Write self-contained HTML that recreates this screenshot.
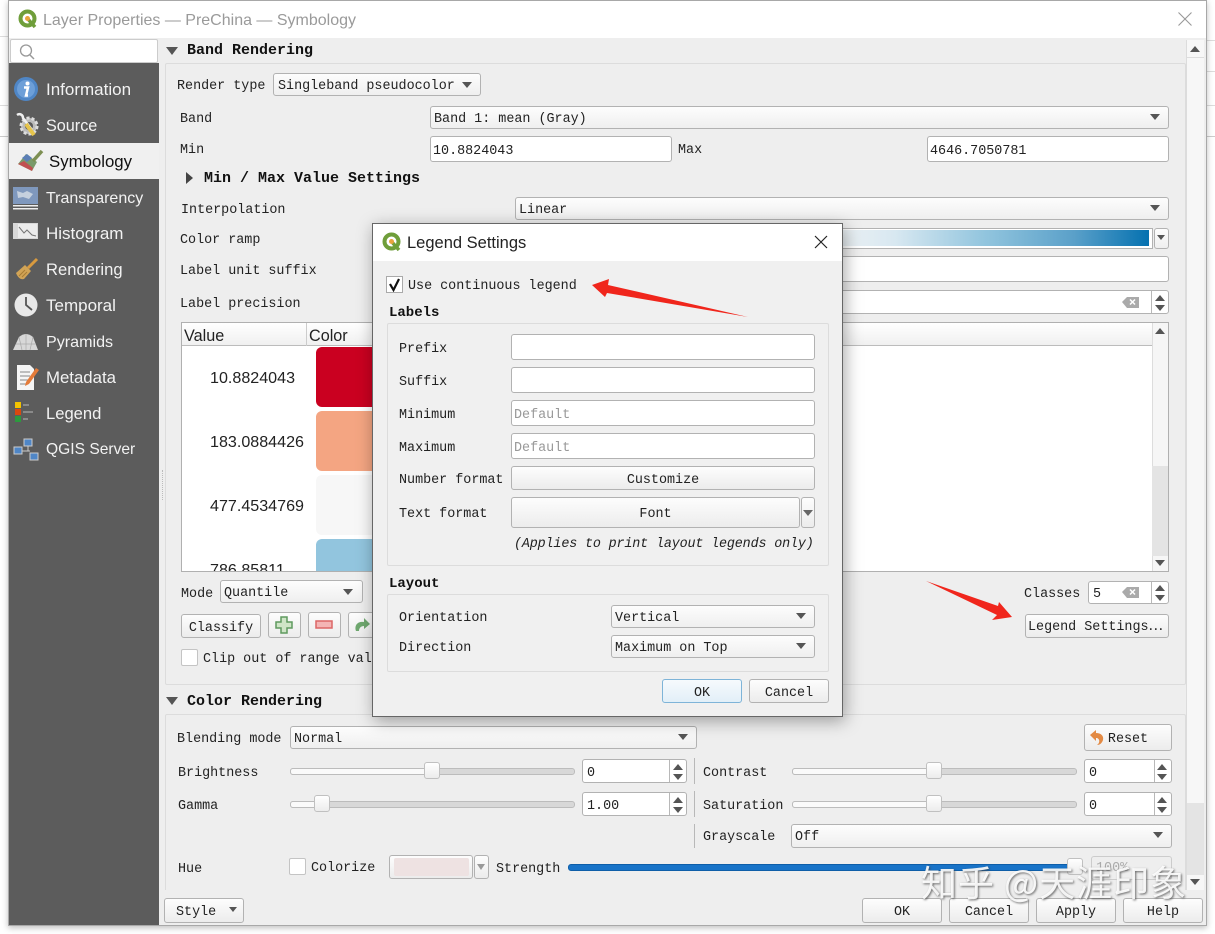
<!DOCTYPE html>
<html><head><meta charset="utf-8"><style>
html,body{margin:0;padding:0;background:#fff}
#p{position:relative;width:1215px;height:934px;overflow:hidden;background:#fff;font-family:"Liberation Mono","Noto Sans CJK SC",monospace;font-size:13.4px;color:#222}
#p div,#p svg{position:absolute;box-sizing:border-box}
.l{white-space:nowrap;height:20px;line-height:20px;margin-top:2px}
.h{white-space:nowrap;height:20px;line-height:20px;margin-top:1px;font-weight:bold;font-size:15px;color:#111}
.s{white-space:nowrap;height:24px;line-height:24px;margin-top:1px;color:#f2f2f2;font-family:"Liberation Sans",sans-serif;font-size:16.6px;left:46px}
.c{background:linear-gradient(#fdfdfd,#efefef);border:1px solid #b2b2b2;border-radius:3px;padding-left:3px;white-space:nowrap;color:#222}
.i{background:#fff;border:1px solid #b2b2b2;border-radius:3px;padding-left:2px;white-space:nowrap;color:#222}
.b{background:linear-gradient(#fdfdfd,#ececec);border:1px solid #b2b2b2;border-radius:3px;text-align:center;white-space:nowrap;color:#222}
.a{width:0;height:0;border-left:5px solid transparent;border-right:5px solid transparent;border-top:6px solid #555}
.u{width:0;height:0;border-left:5px solid transparent;border-right:5px solid transparent;border-bottom:6px solid #555}
.g{border:1px solid #dcdcdc;border-radius:2px}
.v{background:#b8b8b8;width:1px}
.tr{height:7px;border:1px solid #bcbcbc;border-radius:3px;background:#d8d8d8}
.tf{height:7px;border:1px solid #bcbcbc;border-radius:3px;background:#fafafa}
.th{width:16px;height:17px;border:1px solid #c0c0c0;border-radius:3px;background:linear-gradient(#fff,#ececec)}
.sp{border-left:1px solid #b8b8b8}
</style></head><body><div id="p">

<!-- background behind window -->
<div style="left:0;top:36px;width:9px;height:1px;background:#ddd"></div>
<div style="left:0;top:105px;width:9px;height:1px;background:#ddd"></div>
<div style="left:0;top:136px;width:9px;height:1px;background:#ccc"></div>
<div style="left:1207px;top:40px;width:8px;height:1px;background:#ddd"></div>
<div style="left:1207px;top:71px;width:8px;height:1px;background:#ddd"></div>
<div style="left:1207px;top:105px;width:8px;height:1px;background:#ddd"></div>
<div style="left:1207px;top:136px;width:8px;height:1px;background:#ccc"></div>

<!-- window -->
<div style="left:8px;top:0;width:1199px;height:926px;background:#eee;border:1px solid #a8a8a8;box-shadow:0 2px 6px rgba(0,0,0,.25)"></div>
<div style="left:9px;top:1px;width:1197px;height:37px;background:#fff"></div>
<svg style="left:18px;top:9px" width="20" height="20" viewBox="0 0 20 20"><circle cx="9.500" cy="9.500" r="7" fill="none" stroke="#6f9e3a" stroke-width="4"/><path d="M9 9l8 9" stroke="#6f9e3a" stroke-width="3.500"/><circle cx="9.500" cy="9.500" r="2.500" fill="#e8a33d"/></svg>
<div class="l" style="left:43px;top:9px;font-family:'Liberation Sans',sans-serif;font-size:16px;color:#9a9a9a">Layer Properties — PreChina — Symbology</div>
<svg style="left:1177px;top:11px" width="16" height="16"><path d="M1.500 1.500L14.500 14.500M14.500 1.500L1.500 14.500" stroke="#999" stroke-width="1.100"/></svg>

<!-- sidebar -->
<div style="left:9px;top:63px;width:150px;height:862px;background:#5c5c5c"></div>
<div style="left:10px;top:39px;width:148px;height:24px;background:#fff;border:1px solid #ccc;border-radius:2px"></div>
<svg style="left:18px;top:43px" width="18" height="18"><circle cx="8" cy="7.500" r="5.500" fill="none" stroke="#999" stroke-width="1.300"/><path d="M12 12l4 4" stroke="#999" stroke-width="1.500"/></svg>
<div style="left:9px;top:143px;width:150px;height:36px;background:#f0f0f0"></div>
<div class="s" style="top:77px;font-size:17px">Information</div>
<div class="s" style="top:113px;font-size:16.200px">Source</div>
<div class="s" style="top:149px;left:49px;color:#111;font-size:16.800px">Symbology</div>
<div class="s" style="top:186px;font-size:16px">Transparency</div>
<div class="s" style="top:221px;font-size:17px">Histogram</div>
<div class="s" style="top:257px">Rendering</div>
<div class="s" style="top:293px;font-size:17px">Temporal</div>
<div class="s" style="top:329px;font-size:16.100px">Pyramids</div>
<div class="s" style="top:365px;font-size:16.800px">Metadata</div>
<div class="s" style="top:401px">Legend</div>
<div class="s" style="top:437px;font-size:15.600px">QGIS Server</div>

<svg style="left:13px;top:76px" width="26" height="26"><circle cx="13" cy="13" r="12" fill="#4f86c6"/><circle cx="13" cy="13" r="9" fill="#6d9fd8"/><circle cx="14.500" cy="7.500" r="2" fill="#fff"/><path d="M11 11.500h4l-2 8h2" fill="none" stroke="#fff" stroke-width="2.500"/></svg>
<svg style="left:14px;top:112px" width="26" height="26"><circle cx="15" cy="14" r="8" fill="#bbb" stroke="#ddd" stroke-dasharray="3 2" stroke-width="3"/><circle cx="15" cy="14" r="4" fill="#5c5c5c"/><path d="M3 3c3-2 6 0 6 3l9 12" fill="none" stroke="#f0f0f0" stroke-width="2.500"/><path d="M12 12l8 11" stroke="#e5c44c" stroke-width="4"/></svg>
<svg style="left:16px;top:147px" width="28" height="26"><path d="M2 17L10 7l11 8-5 9z" fill="#7a9a6a"/><path d="M2 17l6-3 9 7-1 3z" fill="#c05050"/><path d="M6 11l5-4 5 4-5 4z" fill="#5b7fb5"/><path d="M17 14L26 4" stroke="#7d8f52" stroke-width="3.500"/></svg>
<svg style="left:13px;top:187px" width="26" height="24"><rect width="25" height="17" fill="#7f98bd"/><path d="M4 4l6 2 4-2 6 3-4 5-6-2-5 1z" fill="#c5d0de"/><rect y="18" width="25" height="1.500" fill="#eee"/><rect y="21" width="25" height="1.500" fill="#eee"/></svg>
<svg style="left:13px;top:223px" width="26" height="20"><rect width="25" height="16" fill="#d8d8d8"/><rect x="5" y="1" width="19" height="14" fill="#ececec"/><path d="M6 4l5 6 3-3 5 5 4 1" fill="none" stroke="#777" stroke-width="1"/></svg>
<svg style="left:15px;top:257px" width="24" height="24"><path d="M13 11L22 2" stroke="#d89a3f" stroke-width="3"/><path d="M1 16l9-8 6 6-7 8c-3 1-6-1-8-6z" fill="#d2a456"/><path d="M4 19l6-6M7 20l5-5" stroke="#a87c34"/></svg>
<svg style="left:14px;top:293px" width="25" height="25"><circle cx="12" cy="12" r="11.500" fill="#e8e8e8"/><path d="M12 4v8l6 5" fill="none" stroke="#555" stroke-width="1.800"/></svg>
<svg style="left:13px;top:332px" width="26" height="19"><path d="M0 18L6 5Q13-1 20 5l5 13z" fill="#d8d8d8"/><path d="M6 5l3 13M20 5l-3 13M13 2v16M3 12h20" stroke="#aaa" stroke-width=".7"/></svg>
<svg style="left:16px;top:364px" width="24" height="27"><path d="M1 1h13l4 4v21H1z" fill="#f5f5f5"/><path d="M4 8h10M4 12h10M4 16h8M4 20h6" stroke="#888"/><path d="M10 18L20 4l3 2-10 14-4 2z" fill="#e57c3a"/></svg>
<svg style="left:15px;top:402px" width="20" height="22"><rect width="6" height="6" fill="#f2c200"/><rect y="7" width="6" height="6" fill="#d9480f"/><rect y="14" width="6" height="6" fill="#2c9a3e"/><path d="M8 3h6M8 10h10M8 17h5" stroke="#999" stroke-width="1.500"/></svg>
<svg style="left:13px;top:438px" width="27" height="24"><rect x="11" y="1" width="8" height="7" fill="#4f86c6" stroke="#ccc"/><rect x="1" y="9" width="8" height="7" fill="#4f86c6" stroke="#ccc"/><rect x="17" y="15" width="8" height="7" fill="#4f86c6" stroke="#ccc"/><path d="M15 8v5M9 13h8" stroke="#ccc"/></svg>

<!-- right pane : band rendering -->
<div style="left:162px;top:470px;width:1px;height:30px;border-left:1px dotted #bbb"></div>
<div class="a" style="left:166px;top:47px;border-left-width:6px;border-right-width:6px;border-top-width:8px"></div>
<div class="h" style="left:187px;top:40px">Band Rendering</div>
<div class="g" style="left:165px;top:63px;width:1021px;height:622px"></div>
<div class="l" style="left:177px;top:75px">Render type</div>
<div class="c" style="left:273px;top:73px;width:208px;height:23px;line-height:26px;padding-left:4px">Singleband pseudocolor</div><div class="a" style="left:462px;top:82px"></div>
<div class="l" style="left:180px;top:108px">Band</div>
<div class="c" style="left:430px;top:106px;width:739px;height:23px;line-height:26px">Band 1: mean (Gray)</div><div class="a" style="left:1150px;top:114px"></div>
<div class="l" style="left:180px;top:139px">Min</div>
<div class="i" style="left:430px;top:136px;width:242px;height:26px;line-height:29px">10.8824043</div>
<div class="l" style="left:678px;top:139px">Max</div>
<div class="i" style="left:927px;top:136px;width:242px;height:26px;line-height:29px">4646.7050781</div>
<svg style="left:185px;top:171px" width="10" height="14"><path d="M1 1l7 6-7 6z" fill="#444"/></svg>
<div class="h" style="left:204px;top:168px">Min / Max Value Settings</div>
<div class="l" style="left:181px;top:199px">Interpolation</div>
<div class="c" style="left:515px;top:197px;width:654px;height:23px;line-height:26px">Linear</div><div class="a" style="left:1150px;top:205px"></div>
<div class="l" style="left:180px;top:229px">Color ramp</div>
<div style="left:400px;top:228px;width:753px;height:21px;border:1px solid #b2b2b2;background:#fff"></div>
<div style="left:401px;top:230px;width:748px;height:16px;background:linear-gradient(90deg,#f5f5f5 55%,#d8e8f1 66%,#92c5de 78%,#5aa0c9 90%,#0571b0)"></div>
<div class="c" style="left:1154px;top:228px;width:15px;height:21px"></div><div class="a" style="left:1157px;top:235px;border-left-width:4px;border-right-width:4px;border-top-width:5px"></div>
<div class="l" style="left:180px;top:260px">Label unit suffix</div>
<div class="i" style="left:400px;top:256px;width:769px;height:26px"></div>
<div class="l" style="left:180px;top:293px">Label precision</div>
<div class="i" style="left:400px;top:290px;width:769px;height:24px"></div>
<div class="sp" style="left:1151px;top:291px;width:1px;height:22px"></div>
<svg style="left:1122px;top:296px" width="18" height="12"><path d="M0 6l5-5h12v11H5z" fill="#aaa"/><path d="M8 3.500l5 5M13 3.500l-5 5" stroke="#fff" stroke-width="1.500"/></svg>
<div class="u" style="left:1155px;top:295px"></div><div class="a" style="left:1155px;top:305px"></div>

<!-- table -->
<div style="left:181px;top:322px;width:988px;height:250px;background:#fff;border:1px solid #b0b0b0"></div>
<div style="left:182px;top:323px;width:970px;height:23px;background:linear-gradient(#fff,#f0f0f0);border-bottom:1px solid #bcbcbc"></div>
<div style="left:306px;top:323px;width:1px;height:23px;background:#ccc"></div>
<div class="l" style="left:184px;top:324px;font-family:'Liberation Sans',sans-serif;font-size:16.200px">Value</div>
<div class="l" style="left:309px;top:324px;font-family:'Liberation Sans',sans-serif;font-size:16.200px">Color</div>
<div class="l" style="left:210px;top:366px;font-family:'Liberation Sans',sans-serif;font-size:16.100px">10.8824043</div>
<div class="l" style="left:210px;top:430px;font-family:'Liberation Sans',sans-serif;font-size:16.100px">183.0884426</div>
<div class="l" style="left:210px;top:494px;font-family:'Liberation Sans',sans-serif;font-size:16.100px">477.4534769</div>
<div style="left:210px;top:560px;height:11px;width:90px;overflow:hidden"><div class="l" style="left:0;top:-2px;font-family:'Liberation Sans',sans-serif;font-size:16.100px">786.85811</div></div>
<div style="left:316px;top:347px;width:70px;height:60px;background:#ca0020;border-radius:6px"></div>
<div style="left:316px;top:411px;width:70px;height:60px;background:#f4a582;border-radius:6px"></div>
<div style="left:316px;top:475px;width:70px;height:60px;background:#f7f7f7;border-radius:6px"></div>
<div style="left:316px;top:539px;width:70px;height:32px;background:#92c5de;border-radius:6px 6px 0 0"></div>
<div style="left:1152px;top:323px;width:16px;height:248px;background:#f6f6f6;border-left:1px solid #ddd"></div>
<div style="left:1152px;top:466px;width:16px;height:90px;background:#e4e4e4"></div>
<div class="u" style="left:1155px;top:328px"></div><div class="a" style="left:1155px;top:560px"></div>

<div class="l" style="left:181px;top:583px">Mode</div>
<div class="c" style="left:220px;top:580px;width:143px;height:23px;line-height:26px">Quantile</div><div class="a" style="left:343px;top:589px"></div>
<div class="b" style="left:181px;top:614px;width:80px;height:24px;line-height:28px">Classify</div>
<div class="b" style="left:268px;top:612px;width:33px;height:26px"></div>
<svg style="left:275px;top:616px" width="18" height="18"><path d="M6 1h6v5h5v6h-5v5H6v-5H1V6h5z" fill="#cfe5c7" stroke="#5f9a5f" stroke-width="1.500"/></svg>
<div class="b" style="left:308px;top:612px;width:33px;height:26px"></div>
<svg style="left:315px;top:620px" width="18" height="10"><rect x="1" y="1" width="16" height="7" fill="#f4b5b5" stroke="#dc6666" stroke-width="1.500"/></svg>
<div class="b" style="left:348px;top:612px;width:30px;height:26px"></div>
<svg style="left:354px;top:615px" width="19" height="20"><path d="M2 16c-2-6 2-10 8-9V3l6 6-6 5v-3c-3 0-5 2-5 5z" fill="#6fa86f"/></svg>
<div style="left:181px;top:649px;width:17px;height:17px;background:#fff;border:1px solid #c4c4c4;border-radius:2px"></div>
<div class="l" style="left:203px;top:648px">Clip out of range values</div>
<div class="l" style="left:1024px;top:583px">Classes</div>
<div class="i" style="left:1088px;top:581px;width:81px;height:23px;line-height:25px;padding-left:4px">5</div>
<div class="sp" style="left:1151px;top:582px;height:21px;width:1px"></div>
<svg style="left:1122px;top:586px" width="18" height="12"><path d="M0 6l5-5h12v11H5z" fill="#aaa"/><path d="M8 3.500l5 5M13 3.500l-5 5" stroke="#fff" stroke-width="1.500"/></svg>
<div class="u" style="left:1155px;top:585px"></div><div class="a" style="left:1155px;top:595px"></div>
<div class="b" style="left:1025px;top:614px;width:144px;height:24px;line-height:26px;text-align:left;padding-left:2px">Legend Settings<span style="font-family:'Noto Sans CJK SC',sans-serif;line-height:0">…</span></div>

<!-- color rendering -->
<div class="a" style="left:166px;top:697px;border-left-width:6px;border-right-width:6px;border-top-width:8px"></div>
<div class="h" style="left:187px;top:691px">Color Rendering</div>
<div class="g" style="left:165px;top:714px;width:1021px;height:180px;border-bottom:none"></div>
<div class="l" style="left:177px;top:728px">Blending mode</div>
<div class="c" style="left:290px;top:726px;width:407px;height:23px;line-height:26px">Normal</div><div class="a" style="left:678px;top:734px"></div>
<div class="b" style="left:1084px;top:724px;width:88px;height:27px;line-height:29px">Reset</div>
<svg style="left:1089px;top:729px" width="16" height="17"><path d="M1 6l6-5v3c5 0 8 3 7 7-1 3-3 5-6 5 3-2 3-6 0-7H7v3z" fill="#e38a44"/></svg>

<div class="l" style="left:178px;top:762px">Brightness</div>
<div class="tr" style="left:290px;top:768px;width:285px"></div><div class="tf" style="left:290px;top:768px;width:142px"></div><div class="th" style="left:424px;top:762px"></div>
<div class="i" style="left:582px;top:759px;width:105px;height:24px;line-height:27px;padding-left:4px">0</div><div class="sp" style="left:669px;top:760px;height:22px;width:1px"></div><div class="u" style="left:673px;top:764px"></div><div class="a" style="left:673px;top:774px"></div>
<div class="l" style="left:178px;top:795px">Gamma</div>
<div class="tr" style="left:290px;top:801px;width:285px"></div><div class="tf" style="left:290px;top:801px;width:32px"></div><div class="th" style="left:314px;top:795px"></div>
<div class="i" style="left:582px;top:792px;width:105px;height:24px;line-height:27px;padding-left:4px">1.00</div><div class="sp" style="left:669px;top:793px;height:22px;width:1px"></div><div class="u" style="left:673px;top:797px"></div><div class="a" style="left:673px;top:807px"></div>
<div class="v" style="left:694px;top:758px;height:26px"></div>
<div class="v" style="left:694px;top:791px;height:26px"></div>
<div class="v" style="left:694px;top:824px;height:24px"></div>
<div class="l" style="left:703px;top:762px">Contrast</div>
<div class="tr" style="left:792px;top:768px;width:285px"></div><div class="tf" style="left:792px;top:768px;width:142px"></div><div class="th" style="left:926px;top:762px"></div>
<div class="i" style="left:1084px;top:759px;width:88px;height:24px;line-height:27px;padding-left:4px">0</div><div class="sp" style="left:1154px;top:760px;height:22px;width:1px"></div><div class="u" style="left:1157px;top:764px"></div><div class="a" style="left:1157px;top:774px"></div>
<div class="l" style="left:703px;top:795px">Saturation</div>
<div class="tr" style="left:792px;top:801px;width:285px"></div><div class="tf" style="left:792px;top:801px;width:142px"></div><div class="th" style="left:926px;top:795px"></div>
<div class="i" style="left:1084px;top:792px;width:88px;height:24px;line-height:27px;padding-left:4px">0</div><div class="sp" style="left:1154px;top:793px;height:22px;width:1px"></div><div class="u" style="left:1157px;top:797px"></div><div class="a" style="left:1157px;top:807px"></div>
<div class="l" style="left:703px;top:826px">Grayscale</div>
<div class="c" style="left:791px;top:824px;width:381px;height:24px;line-height:25px">Off</div><div class="a" style="left:1153px;top:832px"></div>

<div class="l" style="left:178px;top:858px">Hue</div>
<div style="left:289px;top:858px;width:17px;height:17px;background:#fff;border:1px solid #c4c4c4;border-radius:2px"></div>
<div class="l" style="left:311px;top:857px">Colorize</div>
<div class="b" style="left:389px;top:855px;width:84px;height:24px"></div>
<div style="left:394px;top:858px;width:75px;height:18px;background:#eee2e2;border-radius:2px"></div>
<div class="b" style="left:474px;top:855px;width:15px;height:24px"></div><div class="a" style="left:477px;top:864px;border-top-color:#999;border-left-width:4px;border-right-width:4px"></div>
<div class="l" style="left:496px;top:858px">Strength</div>
<div style="left:568px;top:864px;width:505px;height:7px;background:#1873c8;border-radius:3px;border:1px solid #0e5ea8"></div>
<div class="th" style="left:1067px;top:858px;width:16px"></div>
<div class="i" style="left:1091px;top:856px;width:81px;height:24px;line-height:24px;color:#aaa;background:#eee;padding-left:4px;border-color:#ccc">100%</div>

<!-- main scrollbar -->
<div style="left:1186px;top:40px;width:18px;height:850px;background:#f7f7f7;border-left:1px solid #dcdcdc"></div>
<div style="left:1187px;top:803px;width:17px;height:72px;background:#e4e4e4"></div>
<div style="left:1187px;top:57px;width:17px;height:1px;background:#ddd"></div>
<div class="u" style="left:1190px;top:46px"></div><div class="a" style="left:1190px;top:879px"></div>

<!-- bottom bar -->
<div style="left:160px;top:890px;width:1046px;height:35px;background:#eee"></div>
<div class="b" style="left:164px;top:898px;width:80px;height:25px;line-height:27px;text-align:left;padding-left:11px">Style</div><div class="a" style="left:229px;top:907px;border-left-width:4px;border-right-width:4px;border-top-width:5px"></div>
<div class="b" style="left:862px;top:898px;width:80px;height:25px;line-height:27px">OK</div>
<div class="b" style="left:949px;top:898px;width:80px;height:25px;line-height:27px">Cancel</div>
<div class="b" style="left:1036px;top:898px;width:80px;height:25px;line-height:27px">Apply</div>
<div class="b" style="left:1123px;top:898px;width:80px;height:25px;line-height:27px">Help</div>

<!-- watermark -->
<div style="left:921px;top:857px;white-space:nowrap;height:48px;line-height:48px;font-family:'Noto Sans CJK SC',sans-serif;font-size:36px;letter-spacing:1px;color:rgba(255,255,255,.9);text-shadow:1px 1px 2px rgba(70,70,70,.8)">知乎 @天涯印象</div>

<!-- dialog -->
<div style="left:372px;top:223px;width:471px;height:494px;background:#f0f0f0;border:1px solid #666;box-shadow:2px 4px 16px rgba(0,0,0,.35)"></div>
<div style="left:373px;top:224px;width:469px;height:37px;background:#fff"></div>
<svg style="left:382px;top:232px" width="20" height="20" viewBox="0 0 20 20"><circle cx="9.500" cy="9.500" r="7" fill="none" stroke="#6f9e3a" stroke-width="4"/><path d="M9 9l8 9" stroke="#6f9e3a" stroke-width="3.500"/><circle cx="9.500" cy="9.500" r="2.500" fill="#e8a33d"/></svg>
<div class="l" style="left:407px;top:231px;font-family:'Liberation Sans',sans-serif;font-size:16.500px;color:#222">Legend Settings</div>
<svg style="left:814px;top:235px" width="14" height="14"><path d="M1 1l12 12M13 1L1 13" stroke="#222" stroke-width="1.200"/></svg>

<div style="left:386px;top:276px;width:17px;height:17px;background:#fff;border:1px solid #aaa"></div>
<svg style="left:388px;top:278px" width="14" height="14"><path d="M2 6l3.500 6L11 1" fill="none" stroke="#111" stroke-width="2.200"/></svg>
<div class="l" style="left:408px;top:275px">Use continuous legend</div>
<div class="h" style="left:389px;top:302px;font-size:14px">Labels</div>
<div class="g" style="left:387px;top:323px;width:442px;height:243px"></div>
<div class="l" style="left:399px;top:338px">Prefix</div><div class="i" style="left:511px;top:334px;width:304px;height:26px"></div>
<div class="l" style="left:399px;top:371px">Suffix</div><div class="i" style="left:511px;top:367px;width:304px;height:26px"></div>
<div class="l" style="left:399px;top:404px">Minimum</div><div class="i" style="left:511px;top:400px;width:304px;height:26px;line-height:30px;color:#999">Default</div>
<div class="l" style="left:399px;top:437px">Maximum</div><div class="i" style="left:511px;top:433px;width:304px;height:26px;line-height:30px;color:#999">Default</div>
<div class="l" style="left:399px;top:469px">Number format</div><div class="b" style="left:511px;top:466px;width:304px;height:24px;line-height:28px">Customize</div>
<div class="l" style="left:399px;top:503px">Text format</div><div class="b" style="left:511px;top:497px;width:289px;height:31px;line-height:34px">Font</div>
<div class="b" style="left:801px;top:497px;width:14px;height:31px"></div><div class="a" style="left:803px;top:510px;border-top-color:#666"></div>
<div class="l" style="left:514px;top:533px;font-style:italic;letter-spacing:-.15px">(Applies to print layout legends only)</div>
<div class="h" style="left:389px;top:573px;font-size:14px">Layout</div>
<div class="g" style="left:387px;top:594px;width:442px;height:78px"></div>
<div class="l" style="left:399px;top:607px">Orientation</div>
<div class="c" style="left:611px;top:605px;width:204px;height:23px;line-height:26px">Vertical</div><div class="a" style="left:796px;top:613px"></div>
<div class="l" style="left:399px;top:637px">Direction</div>
<div class="c" style="left:611px;top:635px;width:204px;height:23px;line-height:26px">Maximum on Top</div><div class="a" style="left:796px;top:643px"></div>
<div class="b" style="left:662px;top:679px;width:80px;height:24px;line-height:27px;border-color:#7eb4d8;background:linear-gradient(#f6fafd,#e2eff8)">OK</div>
<div class="b" style="left:749px;top:679px;width:80px;height:24px;line-height:27px">Cancel</div>

<!-- red arrows -->
<svg style="left:0;top:0" width="1215" height="934"><path d="M592 285L609 279 608 285 748 317 607 293 605 297z" fill="#f0261c"/><path d="M926 581L998 606 999 602 1012 617 992 620 997 615z" fill="#f0261c"/></svg>
</div></body></html>
